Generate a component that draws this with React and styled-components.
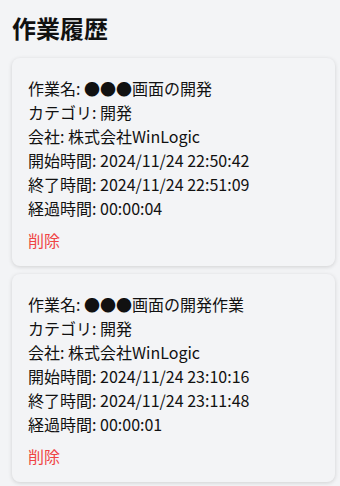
import React from 'react';
import styled, { createGlobalStyle } from 'styled-components';

const GlobalStyle = createGlobalStyle`
  html, body {
    margin: 0;
    padding: 0;
    background: #f3f4f6;
  }
  body {
    font-family: "Noto Sans CJK JP", sans-serif;
    color: #111;
  }
`;

const Page = styled.div`
  padding: 12px 5px 12px 12px;
`;

const Title = styled.h2`
  margin: 0 0 14px;
  font-size: 24px;
  line-height: 32px;
  font-weight: 700;
  color: #111;
`;

const List = styled.div`
  display: flex;
  flex-direction: column;
  gap: 8px;
`;

const Card = styled.div`
  background: #f3f4f6;
  border-radius: 8px;
  box-shadow: 0 1px 4px rgba(0, 0, 0, 0.15);
  padding: 18px 16px 14px;
`;

const Line = styled.p`
  margin: 0;
  font-size: 16px;
  line-height: 24px;
`;

const DeleteButton = styled.button`
  margin-top: 8px;
  padding: 0;
  border: none;
  background: none;
  font: inherit;
  font-size: 16px;
  line-height: 24px;
  color: #ef4444;
  cursor: pointer;
`;

const history = [
  {
    name: '●●●画面の開発',
    category: '開発',
    company: '株式会社WinLogic',
    start: '2024/11/24 22:50:42',
    end: '2024/11/24 22:51:09',
    elapsed: '00:00:04',
  },
  {
    name: '●●●画面の開発作業',
    category: '開発',
    company: '株式会社WinLogic',
    start: '2024/11/24 23:10:16',
    end: '2024/11/24 23:11:48',
    elapsed: '00:00:01',
  },
];

export default function App() {
  return (
    <>
      <GlobalStyle />
      <Page>
        <Title>作業履歴</Title>
        <List>
          {history.map((h, i) => (
            <Card key={i}>
              <Line>作業名: {h.name}</Line>
              <Line>カテゴリ: {h.category}</Line>
              <Line>会社: {h.company}</Line>
              <Line>開始時間: {h.start}</Line>
              <Line>終了時間: {h.end}</Line>
              <Line>経過時間: {h.elapsed}</Line>
              <DeleteButton>削除</DeleteButton>
            </Card>
          ))}
        </List>
      </Page>
    </>
  );
}
